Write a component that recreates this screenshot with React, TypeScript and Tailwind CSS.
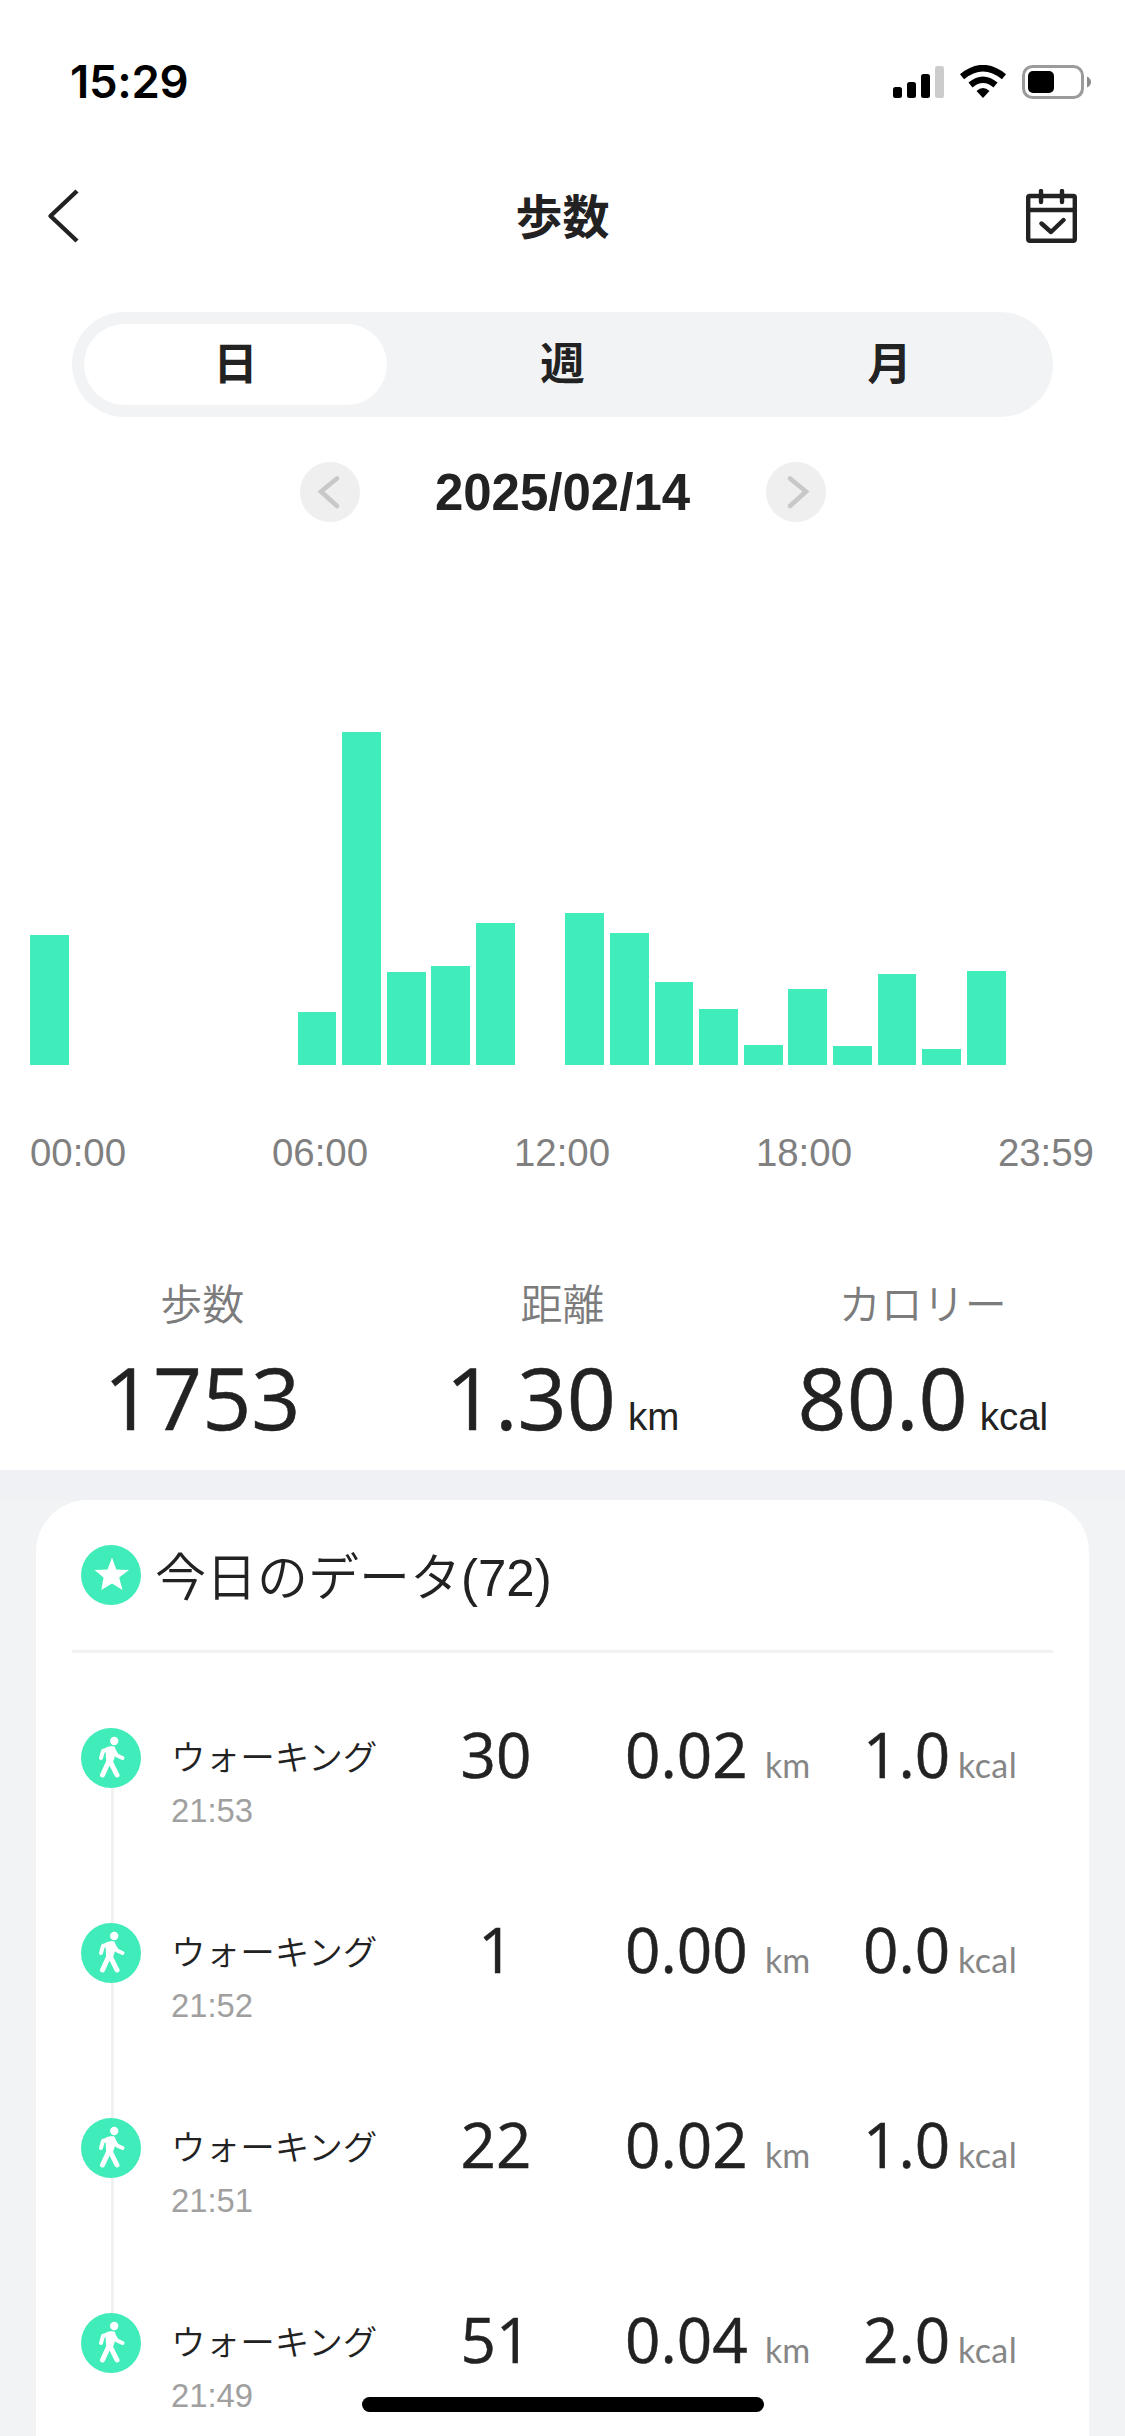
const SANS = 'font-["Liberation_Sans","Noto_Sans_CJK_JP",sans-serif]';
const CJK = 'font-["Noto_Sans_CJK_JP",sans-serif]';
const NUMERIC = 'font-["Open_Sans",sans-serif] [-webkit-text-stroke:0.5px_#222222]';
const UNIT = 'font-["Lato",sans-serif]';

// bar height in px for every hour of the day
const hourlyBars = [
  130, 0, 0, 0, 0, 0, 53, 333, 93, 99, 142, 0, 152, 132, 83, 56, 20, 76, 19, 91, 16, 94, 0, 0,
];

const axisLabels = ['00:00', '06:00', '12:00', '18:00', '23:59'];

const tabs = [
  { label: '日', active: true },
  { label: '週', active: false },
  { label: '月', active: false },
];

type Stat = { label: string; value: string; unit?: string };

const stats: Stat[] = [
  { label: '歩数', value: '1753' },
  { label: '距離', value: '1.30', unit: 'km' },
  { label: 'カロリー', value: '80.0', unit: 'kcal' },
];

type Entry = { time: string; steps: string; km: string; kcal: string };

const entries: Entry[] = [
  { time: '21:53', steps: '30', km: '0.02', kcal: '1.0' },
  { time: '21:52', steps: '1', km: '0.00', kcal: '0.0' },
  { time: '21:51', steps: '22', km: '0.02', kcal: '1.0' },
  { time: '21:49', steps: '51', km: '0.04', kcal: '2.0' },
];

function StatusBar() {
  return (
    <div className="flex h-[150px] shrink-0 items-start justify-between pl-[70px] pr-[33px] text-black">
      <span className='mt-[59px] font-["Inter",sans-serif] text-[45.5px] font-semibold leading-none tracking-[-0.3px]'>
        15:29
      </span>
      <div className="mt-[65px] flex">
        <svg width="52" height="34" viewBox="0 0 52 34">
          <rect x="0" y="22" width="9" height="11" rx="2.5" />
          <rect x="14" y="17" width="9" height="16" rx="2.5" />
          <rect x="28" y="9" width="9" height="24" rx="2.5" />
          <rect x="42" y="1" width="9" height="32" rx="2.5" fill="#cccccc" />
        </svg>
        <svg className="ml-[15px]" width="46" height="34" viewBox="0 0 46 34">
          <path d="M23 33 L16.5 26 Q23 20 29.5 26 Z" />
          <path d="M10.5 20 Q23 9.5 35.5 20" fill="none" stroke="#000" strokeWidth="6.4" />
          <path d="M2 11.8 Q23 -5.4 44 11.8" fill="none" stroke="#000" strokeWidth="6.6" />
        </svg>
        <svg className="ml-4" width="70" height="34" viewBox="0 0 70 34">
          <rect x="1.5" y="1.5" width="59" height="31" rx="9" fill="none" stroke="#9b9b9b" strokeWidth="3" />
          <rect x="6" y="6" width="26" height="22" rx="5" />
          <path d="M65 11.5 Q69 13.5 69 17 Q69 20.5 65 22.5 Z" fill="#8c8c8c" />
        </svg>
      </div>
    </div>
  );
}

function Header() {
  return (
    <header className="flex h-[131px] shrink-0 items-center justify-between px-[47px] text-[#222222]">
      <svg width="52" height="54" viewBox="0 0 52 54" fill="none" stroke="currentColor" strokeWidth="4.4">
        <path d="M30 2 L3.5 27 L30 52" strokeLinejoin="round" />
      </svg>
      <h1 className={`${CJK} pb-[4px] text-[47px] font-bold leading-none`}>歩数</h1>
      <svg
        width="52"
        height="54"
        viewBox="0 0 52 54"
        fill="none"
        stroke="currentColor"
        strokeWidth="4.4"
        strokeLinecap="round"
        strokeLinejoin="round"
      >
        <rect x="2.2" y="7" width="46.6" height="44.8" rx="1.5" />
        <path d="M2 21 H49 M15 2 V13 M36 2 V13 M15.5 34.5 L25 43 L37.5 31" />
      </svg>
    </header>
  );
}

function PeriodTabs() {
  return (
    <div className="mx-[72px] mt-[31px] grid h-[105px] shrink-0 grid-cols-3 rounded-full bg-[#f1f3f5] py-3">
      {tabs.map((tab) => (
        <div key={tab.label} className="px-3">
          <div
            className={`${CJK} flex h-full items-center justify-center rounded-full pb-1.5 text-[44.5px] font-bold leading-none ${
              tab.active ? 'bg-white' : ''
            }`}
          >
            {tab.label}
          </div>
        </div>
      ))}
    </div>
  );
}

function ArrowButton({ path }: { path: string }) {
  return (
    <svg width="60" height="60" viewBox="0 0 60 60" fill="none">
      <circle cx="30" cy="30" r="30" fill="#efefef" />
      <path d={path} stroke="#c8c8c8" strokeWidth="4.6" strokeLinecap="round" />
    </svg>
  );
}

function DatePicker() {
  return (
    <div className="mt-[45px] flex h-[60px] shrink-0 items-center justify-center">
      <ArrowButton path="M37 16.5 L21 29.5 L37 44" />
      <span className={`${SANS} w-[406px] text-center text-[51px] font-bold leading-none`}>2025/02/14</span>
      <ArrowButton path="M24 16.5 L40 29.5 L24 44" />
    </div>
  );
}

function StepsChart() {
  return (
    <div className="mt-[60px] shrink-0 px-[30px]">
      <div className="flex h-[483px] items-end gap-[5.8px]">
        {hourlyBars.map((height, hour) => (
          <div key={hour} className="flex-1 bg-[#40ecb9]" style={{ height }} />
        ))}
      </div>
      <div
        className={`${SANS} mr-px mt-[68px] flex h-[39px] justify-between text-[38.4px] leading-[39px] text-[#808080]`}
      >
        {axisLabels.map((label) => (
          <span key={label}>{label}</span>
        ))}
      </div>
    </div>
  );
}

function Summary() {
  return (
    <div className="mt-[109px] grid h-[189px] shrink-0 grid-cols-3 px-[22px]">
      {stats.map((stat) => (
        <div key={stat.label} className="flex flex-col items-center">
          <span className={`${CJK} text-[42px] font-[350] leading-none text-[#7c7c7c]`}>{stat.label}</span>
          <div className="mt-[31px] flex items-baseline">
            <span className={`${NUMERIC} text-[86px] font-medium leading-none`}>{stat.value}</span>
            {stat.unit && <span className={`${SANS} ml-3 text-[38.5px] leading-none`}>{stat.unit}</span>}
          </div>
        </div>
      ))}
    </div>
  );
}

function WalkIcon() {
  return (
    <svg width="60" height="60" viewBox="0 0 60 60" fill="none" stroke="#fff" strokeLinecap="round" strokeLinejoin="round">
      <circle cx="30" cy="30" r="30" fill="#40ecb9" stroke="none" />
      <circle cx="33.2" cy="13" r="4.2" fill="#fff" stroke="none" />
      <path d="M27 21 L32 20.5 L32.5 25 L30 33 L27.5 33 L27 27 Z" fill="#fff" strokeWidth="4.6" />
      <path d="M30 20.5 L22 23 L20 30" strokeWidth="4" />
      <path d="M32.5 22 L36 27.5 L41.5 30" strokeWidth="4" />
      <path d="M27.5 34 L21.5 47 M29 33 L36 47" strokeWidth="5" />
    </svg>
  );
}

function EntryRow({ entry, last }: { entry: Entry; last: boolean }) {
  return (
    <div className="flex h-[195px] items-start pl-[45px]">
      <div className="mt-[5px] w-[60px]">
        <WalkIcon />
        {!last && <div className="ml-[30px] h-[135px] w-[3px] bg-[#f1f1f1]" />}
      </div>
      <div className="ml-[30px] mt-[15px] w-[231px] whitespace-nowrap">
        <div className={`${CJK} text-[34.6px] font-[350] leading-none`}>ウォーキング</div>
        <div className={`${SANS} mt-[22px] text-[32.8px] leading-none text-[#a0a0a0]`}>{entry.time}</div>
      </div>
      <div className={`${NUMERIC} w-[188px] text-center text-[62px] font-medium leading-none`}>{entry.steps}</div>
      <div className="ml-[35px] flex w-[238px] items-baseline">
        <span className={`${NUMERIC} w-[140px] text-[62px] font-medium leading-none`}>{entry.km}</span>
        <span className={`${UNIT} text-[34px] leading-none text-[#868686]`}>km</span>
      </div>
      <div className="flex items-baseline">
        <span className={`${NUMERIC} w-[95px] text-[62px] font-medium leading-none`}>{entry.kcal}</span>
        <span className={`${UNIT} text-[34px] leading-none tracking-[0.4px] text-[#868686]`}>kcal</span>
      </div>
    </div>
  );
}

function TodayCard() {
  return (
    <div className="grow bg-[#f1f3f5] px-9">
      <section className="h-full rounded-t-[52px] bg-white">
        <div className="mx-9 flex h-[153px] items-start border-b-[3px] border-[#f2f2f2] pl-[9px] pt-[45px]">
          <svg width="60" height="60" viewBox="0 0 60 60">
            <circle cx="30" cy="30" r="30" fill="#40ecb9" />
            <path
              d="M31 12.5 L35.3 24.5 L48 25 L38.2 32.5 L41.5 45 L31 38.5 L20.3 45 L22.5 32.5 L13.5 25 L26.5 24.5 Z"
              fill="#fff"
            />
          </svg>
          <h2 className={`${SANS} ml-[14px] mt-2 text-[51px] font-[350] leading-none`}>今日のデータ(72)</h2>
        </div>
        <div className="pt-[70px]">
          {entries.map((entry, i) => (
            <EntryRow key={entry.time} entry={entry} last={i === entries.length - 1} />
          ))}
        </div>
      </section>
    </div>
  );
}

export default function App() {
  return (
    <div className="relative flex h-[2436px] w-[1125px] flex-col overflow-hidden bg-white text-[#222222]">
      <StatusBar />
      <Header />
      <PeriodTabs />
      <DatePicker />
      <StepsChart />
      <Summary />
      <div className="h-[30px] shrink-0 bg-[#eff1f4]" />
      <TodayCard />
      <div className="absolute bottom-6 left-[362px] h-[15px] w-[402px] rounded-full bg-black" />
    </div>
  );
}
